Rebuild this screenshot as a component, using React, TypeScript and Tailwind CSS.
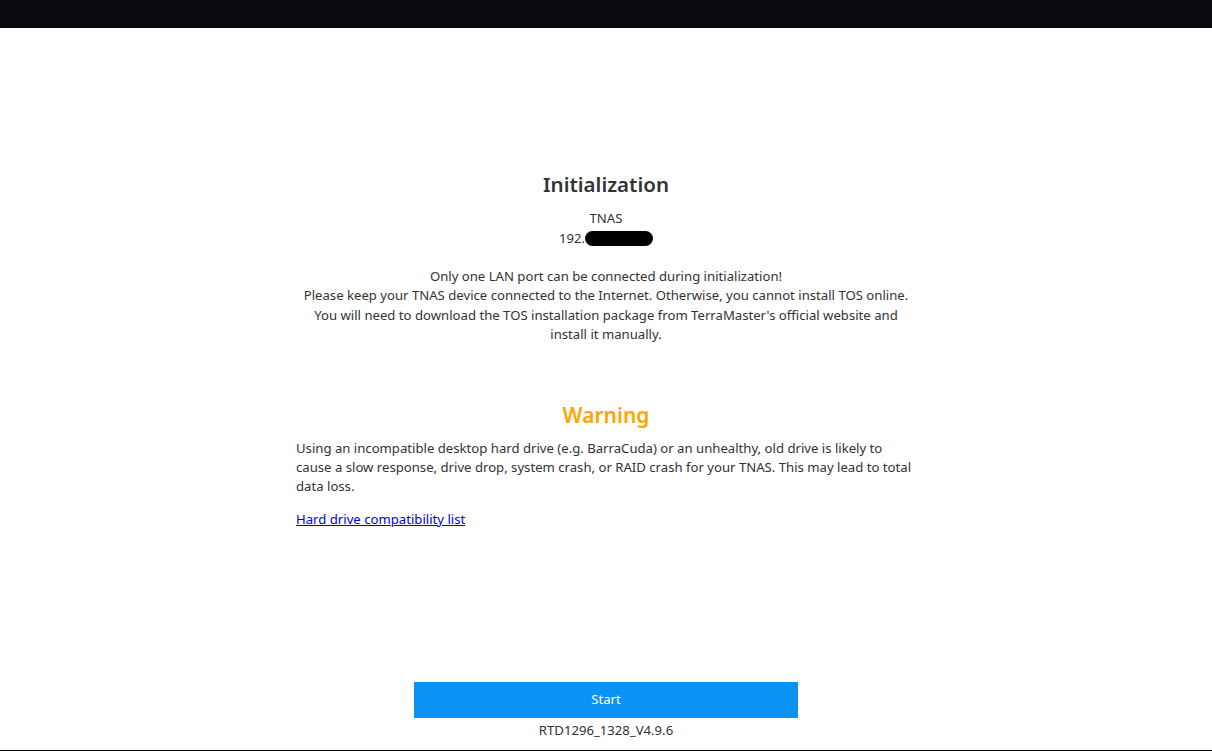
const App = () => {
  return (
    <div
      className="flex h-screen flex-col bg-white text-[#333]"
      style={{ fontFamily: '"Noto Sans", "Open Sans", sans-serif' }}
    >
      <div className="h-[28px] shrink-0 bg-[#0a0a0f]" />

      <main className="mx-auto flex w-[620px] flex-1 flex-col pt-[141px] text-[13.15px] leading-[19.4px]">
        <section className="text-center">
          <h1 className="text-[20.5px] font-semibold leading-[30px] text-[#333]">Initialization</h1>
          <div className="mt-[9px] leading-[20px]">TNAS</div>
          <div className="leading-[20px]">
            192.
            <span className="inline-block h-[15px] w-[68px] translate-y-[3px] rounded-full bg-black align-baseline" />
          </div>
          <div className="mt-[19px]">
            <p>Only one LAN port can be connected during initialization!</p>
            <p>Please keep your TNAS device connected to the Internet. Otherwise, you cannot install TOS online.</p>
            <p>
              You will need to download the TOS installation package from TerraMaster's official website and
              install it manually.
            </p>
          </div>
        </section>

        <section className="mt-[55px]">
          <h2 className="text-center text-[21px] font-semibold leading-[30px] text-[#ffa500]">Warning</h2>
          <p className="mt-[9px]">
            Using an incompatible desktop hard drive (e.g. BarraCuda) or an unhealthy, old drive is likely to
            cause a slow response, drive drop, system crash, or RAID crash for your TNAS. This may lead to total
            data loss.
          </p>
          <a href="#" className="mt-[13px] inline-block self-start text-[#0000ee] underline">
            Hard drive compatibility list
          </a>
        </section>
      </main>

      <footer className="flex shrink-0 flex-col items-center pb-[10px] text-[13.15px]">
        <button className="h-[36px] w-[384px] bg-[#0a93f5] text-white">Start</button>
        <div className="mt-[2px] leading-[20px]">RTD1296_1328_V4.9.6</div>
      </footer>
      <div className="h-px shrink-0 bg-black" />
    </div>
  );
};

export default App;
